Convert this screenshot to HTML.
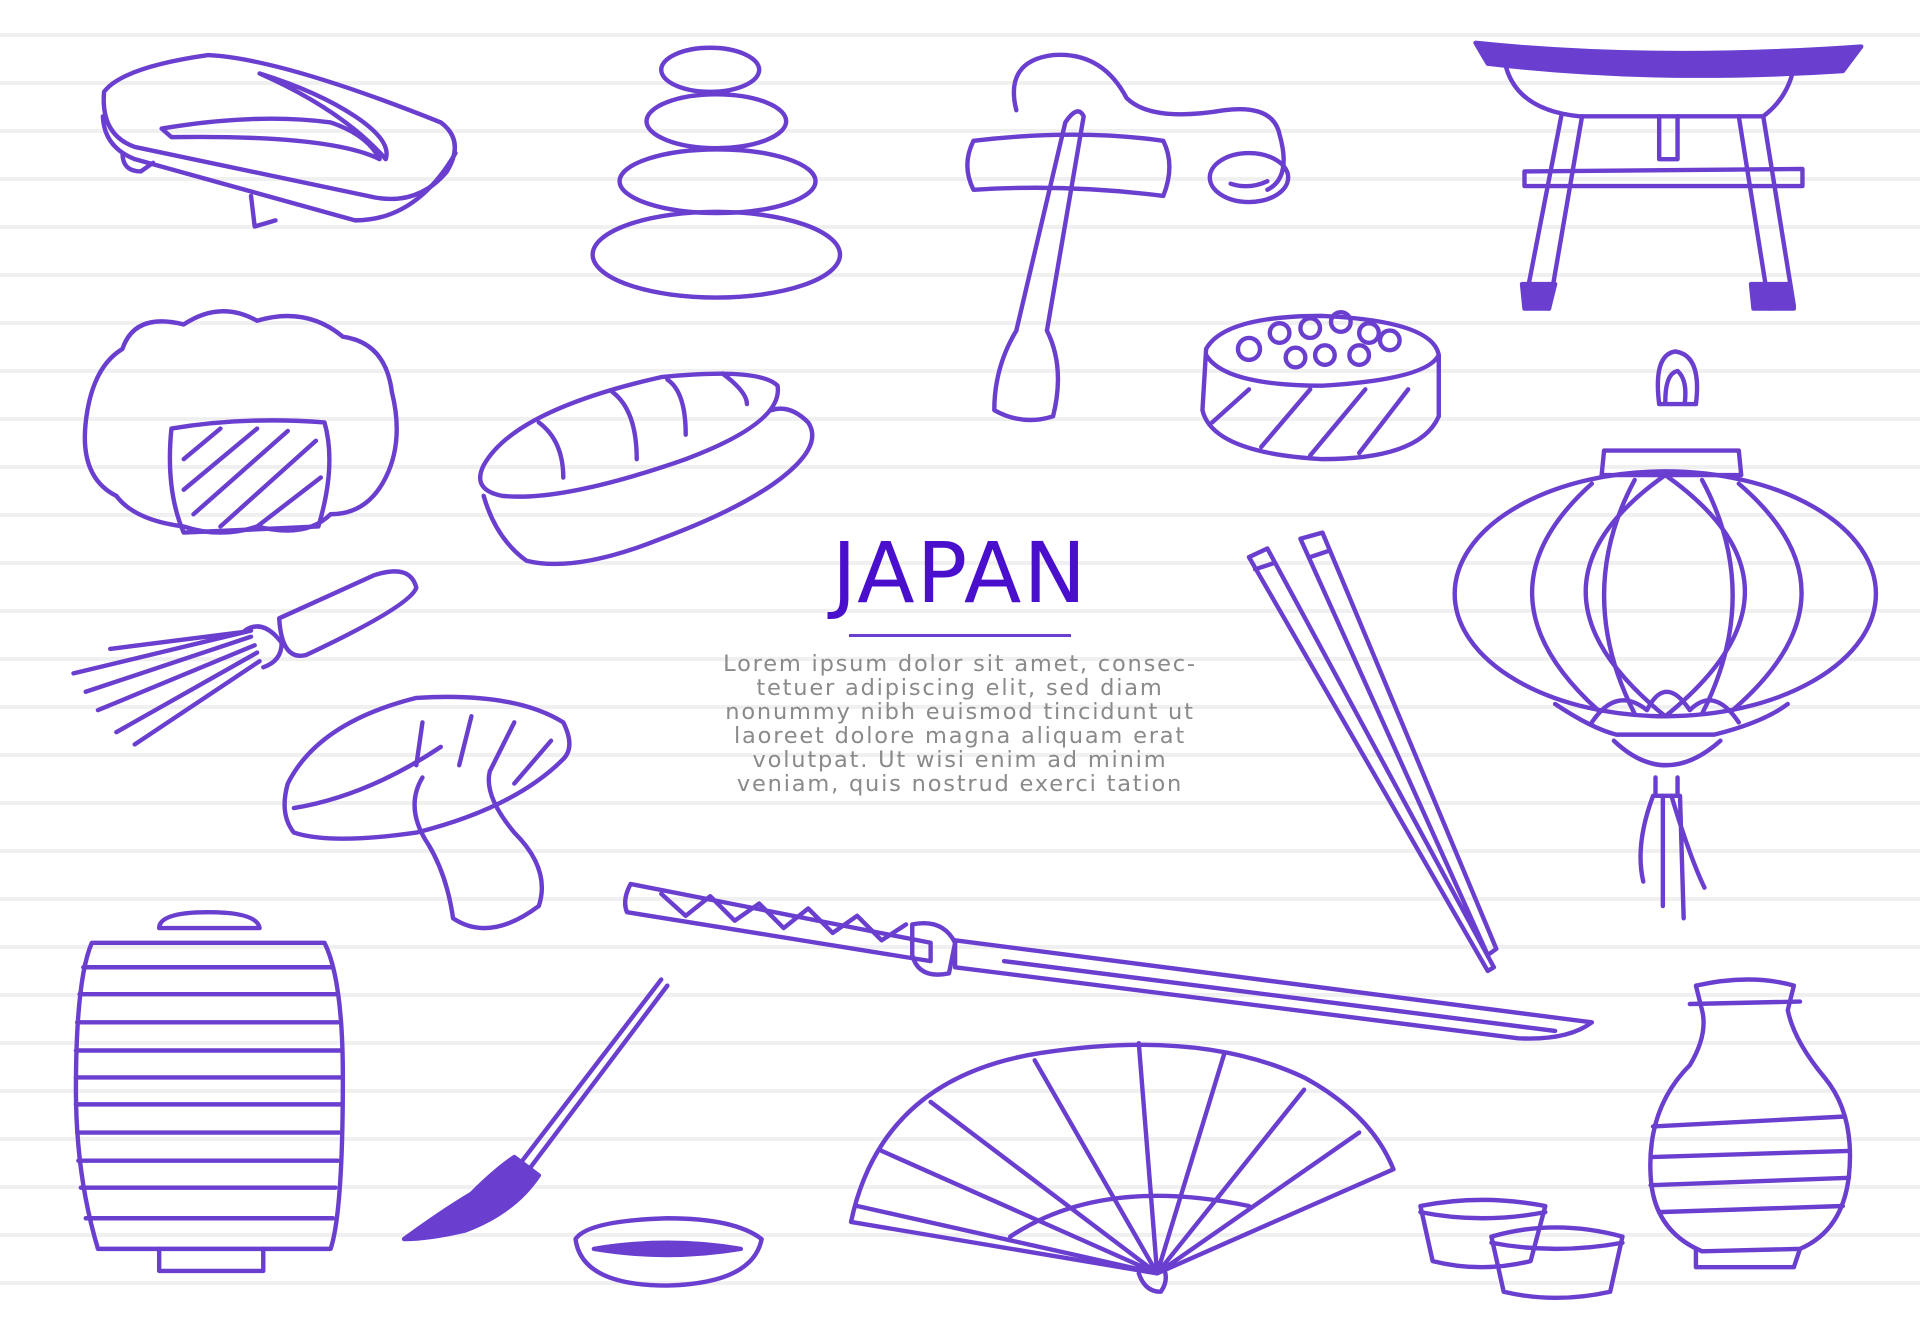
<!DOCTYPE html>
<html><head><meta charset="utf-8"><style>
html,body{margin:0;padding:0;background:#fff;}
#w{position:relative;width:1920px;height:1326px;overflow:hidden;background:#fff;
background-image:repeating-linear-gradient(to bottom,transparent 0,transparent 33px,#f0f0f0 33px,#f0f0f0 37px,transparent 37px,transparent 48px);}
svg{position:absolute;left:0;top:0}
.t{position:absolute;left:660px;width:600px;text-align:center;font-family:"DejaVu Sans","Liberation Sans",sans-serif;}
#title{top:528px;font-size:84px;color:#4a0fcc;letter-spacing:2px;line-height:90px}
#ul{position:absolute;left:849px;top:634px;width:222px;height:3px;background:#6a3fcf}
#p{top:652px;font-size:22.5px;letter-spacing:1.8px;line-height:24px;color:#8a8a8a}
</style></head><body><div id="w">
<svg width="1920" height="1326" viewBox="0 0 1568 1083" preserveAspectRatio="none" fill="none" stroke="#6a3fcf" stroke-width="3.6" stroke-linecap="round" stroke-linejoin="round">
<path d="M85 75 Q100 55 170 45 Q230 48 360 100 Q380 115 365 140 Q340 170 300 160 L110 120 Q82 110 85 75Z"/>
<path d="M84 95 Q85 120 110 130 L290 180 Q340 180 372 125"/>
<path d="M100 125 Q100 140 115 140 L125 133 M205 160 L208 185 L225 180"/>
<path d="M132 105 Q210 92 270 100 Q300 110 310 130 Q270 110 140 112Z M212 60 Q260 75 290 95 Q320 115 315 130 Q280 90 212 60Z"/>
<ellipse cx="580" cy="57" rx="40" ry="18"/><ellipse cx="585" cy="99" rx="57" ry="22"/>
<ellipse cx="586" cy="148" rx="80" ry="26"/><ellipse cx="585" cy="208" rx="101" ry="35"/>
<path d="M830 90 Q820 50 860 45 Q900 42 920 80 Q940 100 1000 90 Q1040 85 1045 110 Q1055 145 1035 155"/>
<ellipse cx="1020" cy="145" rx="32" ry="20"/><path d="M1005 150 Q1020 155 1035 148"/>
<path d="M795 115 Q880 105 950 115 Q960 135 950 160 Q870 150 795 155 Q785 135 795 115Z"/>
<path d="M870 100 Q880 85 885 95 L855 270 Q870 300 860 340 Q835 348 812 335 Q812 300 830 270 Z"/>
<path d="M1205 35 Q1350 50 1520 38 L1505 58 Q1350 68 1215 52Z" fill="#6a3fcf"/>
<path d="M1230 55 Q1240 90 1290 95 L1440 95 Q1460 80 1465 55"/>
<path d="M1245 140 L1472 138 L1472 152 L1245 152Z"/>
<path d="M1275 95 L1245 250 L1265 252 L1292 95 M1420 95 L1445 252 L1465 250 L1440 95 M1355 95 L1355 130 L1370 130 L1370 95"/>
<path d="M1243 232 L1245 252 L1265 252 L1270 232Z M1430 232 L1432 252 L1465 252 L1460 232Z" fill="#6a3fcf"/>
<path d="M100 285 Q110 255 150 265 Q180 245 210 262 Q250 250 280 275 Q315 280 320 320 Q330 360 315 390 Q300 420 270 420 Q250 440 210 430 Q180 440 150 430 Q110 425 95 405 Q65 390 70 345 Q75 300 100 285Z"/>
<path d="M140 350 Q200 340 265 345 Q275 380 260 430 L150 435 Q135 400 140 350Z"/>
<path d="M150 375 L180 350 M150 400 L210 350 M158 420 L235 352 M180 430 L258 360 M210 430 L262 390"/>
<path d="M985 285 Q1000 258 1080 258 Q1170 262 1175 290 L1175 340 Q1160 375 1080 375 Q990 370 982 335Z"/>
<path d="M985 290 Q1000 315 1080 315 Q1165 310 1175 290"/>
<circle cx="1045" cy="272" r="8"/><circle cx="1070" cy="268" r="8"/><circle cx="1095" cy="263" r="8"/><circle cx="1118" cy="272" r="8"/><circle cx="1058" cy="292" r="8"/><circle cx="1082" cy="290" r="8"/><circle cx="1110" cy="290" r="8"/><circle cx="1135" cy="278" r="8"/><circle cx="1020" cy="285" r="9"/>
<path d="M990 345 L1020 318 M1030 365 L1070 318 M1070 372 L1115 318 M1110 370 L1150 318"/>
<path d="M395 380 Q420 335 540 308 Q620 300 635 315 Q640 345 560 375 Q460 410 410 405 Q385 400 395 380Z"/>
<path d="M440 345 Q460 360 460 390 M500 320 Q520 335 520 375 M545 310 Q560 320 560 355 M590 305 Q610 320 610 330"/>
<path d="M395 405 Q405 440 430 458 Q470 468 540 440 Q620 410 650 380 Q670 360 660 345 Q645 330 630 335"/>
<path d="M228 505 L305 470 Q335 460 340 480 Q335 495 250 535 Q230 540 228 505Z"/>
<path d="M200 515 Q215 505 230 525 Q230 540 215 545"/>
<path d="M205 515 L60 550 M205 520 L70 565 M208 527 L80 580 M210 533 L95 598 M212 540 L110 608 M200 516 L90 530"/>
<path d="M235 640 Q260 590 340 570 Q420 565 460 590 Q470 610 460 620 Q420 660 340 680 Q270 690 240 680 Q228 665 235 640Z"/>
<path d="M240 660 Q300 650 360 610 M345 590 L340 625 M385 585 L375 625 M420 590 L400 630 M450 605 L420 640"/>
<path d="M345 635 Q330 660 350 690 Q365 715 370 750 Q400 770 440 740 Q450 710 420 680 Q395 650 400 630"/>
<path d="M1355 330 Q1350 290 1368 287 Q1390 290 1385 330Z M1360 328 Q1360 305 1370 303 Q1378 310 1376 328"/>
<path d="M1310 368 L1420 368 L1422 388 L1308 388Z"/>
<ellipse cx="1360" cy="485" rx="172" ry="100"/>
<path d="M1360 388 Q1230 480 1360 585 Q1490 480 1360 388 M1300 395 Q1200 485 1305 580 M1420 395 Q1525 485 1415 580 M1335 392 Q1285 485 1335 583 M1390 392 Q1440 485 1390 583"/>
<path d="M1270 575 Q1300 595 1320 600 L1400 600 Q1440 590 1460 575 M1300 590 Q1320 560 1345 580 Q1360 550 1380 580 Q1400 560 1420 590"/>
<path d="M1318 605 Q1360 645 1405 605 M1352 635 L1352 650 L1370 650 L1370 635"/>
<path d="M1350 650 Q1335 690 1342 720 M1358 650 L1358 740 M1365 650 Q1380 700 1392 725 M1372 650 L1375 750"/>
<path d="M1020 455 L1035 448 L1220 790 L1215 793Z M1062 440 L1080 435 L1222 775 L1215 780Z M1025 465 L1040 460 M1070 455 L1085 450"/>
<path d="M130 758 Q130 745 170 745 Q210 745 212 758 Z"/>
<path d="M75 770 L265 770 Q280 800 280 880 Q280 990 270 1020 L80 1020 Q62 960 62 890 Q62 800 75 770Z"/>
<path d="M68 790 L272 790 M65 812 L275 812 M63 835 L276 835 M62 858 L278 858 M62 880 L278 880 M62 902 L278 902 M63 925 L277 925 M64 948 L276 948 M66 970 L274 970 M70 995 L272 995"/>
<path d="M130 1020 L130 1038 L215 1038 L215 1020"/>
<path d="M515 722 L760 770 L760 785 L512 745 Q508 735 515 722Z"/>
<path d="M540 730 L560 748 L580 732 L600 752 L620 738 L640 758 L660 742 L680 762 L700 748 L720 768 L740 755"/>
<path d="M745 755 Q770 750 780 770 L775 795 Q750 800 745 780Z"/>
<path d="M780 768 L1300 835 Q1280 850 1240 848 L780 790Z M820 785 L1270 842"/>
<path d="M540 800 L425 950 M545 805 L432 955"/>
<path d="M420 945 L440 960 Q420 990 380 1005 Q350 1012 330 1012 Q360 990 385 975 Q405 955 420 945Z" fill="#6a3fcf"/>
<path d="M470 1012 Q475 1050 545 1050 Q615 1048 622 1012 Q600 995 545 995 Q480 997 470 1012Z"/>
<path d="M485 1020 Q545 1010 605 1020 Q545 1030 485 1020Z" fill="#6a3fcf"/>
<path d="M695 998 Q720 880 850 860 Q980 840 1065 880 Q1120 910 1138 955 L945 1040 Z"/>
<path d="M825 1010 Q900 960 1020 985 M945 1040 L700 985 M945 1040 L720 940 M945 1040 L760 900 M945 1040 L845 866 M945 1040 L930 852 M945 1040 L1000 860 M945 1040 L1065 890 M945 1040 L1110 925"/>
<path d="M930 1040 Q935 1055 948 1055 Q955 1045 950 1035"/>
<path d="M1160 985 Q1210 975 1262 985 L1250 1030 Q1210 1040 1170 1030Z M1160 990 Q1210 1000 1262 990"/>
<path d="M1218 1010 Q1270 995 1325 1010 L1315 1055 Q1270 1065 1228 1055Z M1218 1015 Q1270 1025 1325 1015"/>
<path d="M1385 805 Q1430 795 1465 805 L1460 825 Q1465 850 1490 880 Q1515 910 1510 960 Q1505 1005 1470 1020 L1390 1022 Q1350 1005 1348 960 Q1345 905 1380 870 Q1395 845 1390 825Z"/>
<path d="M1380 820 L1470 818 M1350 920 L1505 912 M1348 945 L1510 940 M1348 968 L1510 962 M1355 990 L1505 985 M1385 1020 L1385 1035 L1465 1035 L1470 1020"/>
</svg>
<div class="t" id="title">JAPAN</div>
<div id="ul"></div>
<div class="t" id="p">Lorem ipsum dolor sit amet, consec-<br>tetuer adipiscing elit, sed diam<br>nonummy nibh euismod tincidunt ut<br>laoreet dolore magna aliquam erat<br>volutpat. Ut wisi enim ad minim<br>veniam, quis nostrud exerci tation</div>
</div></body></html>
